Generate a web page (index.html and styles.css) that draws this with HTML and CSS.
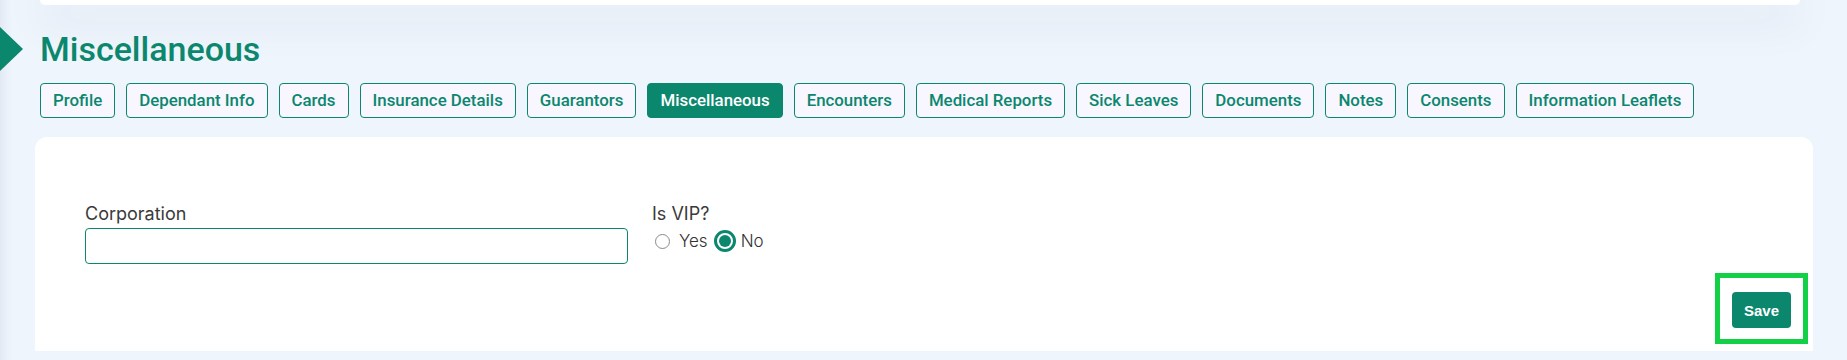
FILE: index.html
```html
<!DOCTYPE html>
<html lang="en">
<head>
<meta charset="utf-8">
<title>Miscellaneous</title>
<link rel="stylesheet" href="styles.css">
</head>
<body>
<div class="page">
  <div class="topbar"></div>
  <div class="heading">
    <span class="marker"></span>
    <h1 class="title">Miscellaneous</h1>
  </div>
  <nav class="tabs">
    <a class="tab">Profile</a>
    <a class="tab">Dependant Info</a>
    <a class="tab">Cards</a>
    <a class="tab">Insurance Details</a>
    <a class="tab">Guarantors</a>
    <a class="tab active">Miscellaneous</a>
    <a class="tab">Encounters</a>
    <a class="tab">Medical Reports</a>
    <a class="tab">Sick Leaves</a>
    <a class="tab">Documents</a>
    <a class="tab">Notes</a>
    <a class="tab">Consents</a>
    <a class="tab">Information Leaflets</a>
  </nav>
  <section class="card">
    <div class="form-row">
      <div class="field">
        <label class="label" for="corp">Corporation</label>
        <input class="input" id="corp" type="text">
      </div>
      <div class="field">
        <span class="label">Is VIP?</span>
        <div class="radios">
          <label class="opt"><span class="radio"></span><span class="opt-text">Yes</span></label>
          <label class="opt"><span class="radio checked"></span><span class="opt-text">No</span></label>
        </div>
      </div>
    </div>
    <div class="actions">
      <div class="save-wrap">
        <button class="save" type="button">Save</button>
      </div>
    </div>
  </section>
</div>
</body>
</html>
```
FILE: styles.css
```css
* { box-sizing: border-box; }
html, body { margin: 0; padding: 0; }
body {
  background: linear-gradient(to right, #e3e9f2 0px, #eaf0f9 6px, #eff5fd 12px);
  font-family: "Inter", "Roboto", sans-serif;
  overflow: hidden;
  height: 360px;
}
.page { display: flex; flex-direction: column; }

.topbar {
  height: 5px;
  margin: 0 47px 0 40px;
  background: #ffffff;
  border-radius: 0 0 25px 25px;
  box-shadow: 0 8px 45px rgba(30, 40, 60, 0.3);
}

.heading {
  display: flex;
  align-items: center;
  margin-top: 24px;
  height: 40px;
}
.marker {
  width: 0; height: 0;
  border-left: 23px solid #0b876e;
  border-top: 22px solid transparent;
  border-bottom: 22px solid transparent;
}
.title {
  margin: 0 0 0 17px;
  font-family: "Roboto", sans-serif;
  font-weight: 500;
  font-size: 34px;
  line-height: 40px;
  color: #0b876e;
}

.tabs {
  display: flex;
  gap: 11px;
  margin: 14px 0 0 40px;
}
.tab {
  display: flex;
  align-items: center;
  height: 35px;
  padding: 0 12px;
  border: 1px solid #0b876e;
  border-radius: 4px;
  background: #f8f6ff;
  color: #0b876e;
  font-family: "Roboto", sans-serif;
  font-weight: 500;
  font-size: 16.85px;
  line-height: 19px;
  white-space: nowrap;
}
.tab.active { background: #0b876e; color: #ffffff; }

.card {
  margin: 19px 34px 0 35px;
  background: #ffffff;
  border-radius: 12px 12px 0 0;
  padding: 66px 22px 23px 50px;
}
.form-row {
  display: grid;
  grid-template-columns: 543px 1fr;
  column-gap: 24px;
}
.field { display: flex; flex-direction: column; }
.label {
  font-size: 18px;
  line-height: 22px;
  color: #3a3a3a;
}
.input {
  margin-top: 3px;
  height: 36px;
  border: 1px solid #0b876e;
  border-radius: 4px;
  background: #fff;
  font: inherit;
  outline: none;
}
.radios {
  display: flex;
  align-items: center;
  height: 22px;
  margin-top: 5px;
}
.opt { display: flex; align-items: center; }
.opt-text {
  font-size: 17px;
  font-weight: 300;
  color: #333333;
}
.radio {
  width: 15px; height: 15px;
  border: 1px solid #8a8a8a;
  border-radius: 50%;
  margin: 0 9px 0 3px;
  background: #fff;
}
.opt + .opt .radio { margin-left: 6px; }
.radio.checked {
  width: 22px; height: 22px;
  border: 3px solid #0b876e;
  padding: 2px;
  background: #0b876e;
  background-clip: content-box;
  margin-right: 5px;
}

.actions {
  display: flex;
  justify-content: flex-end;
  margin-top: 28px;
}
.save-wrap { position: relative; }
.save-wrap::after {
  content: "";
  position: absolute;
  top: -19px; bottom: -16px; left: -17px; right: -17px;
  border: 5px solid #12d146;
  pointer-events: none;
}
.save {
  height: 36px;
  padding: 0 12px;
  border: none;
  border-radius: 4px;
  background: #0b876e;
  color: #ffffff;
  font-family: "Liberation Sans", Arial, sans-serif;
  font-weight: 700;
  font-size: 15px;
}
```
